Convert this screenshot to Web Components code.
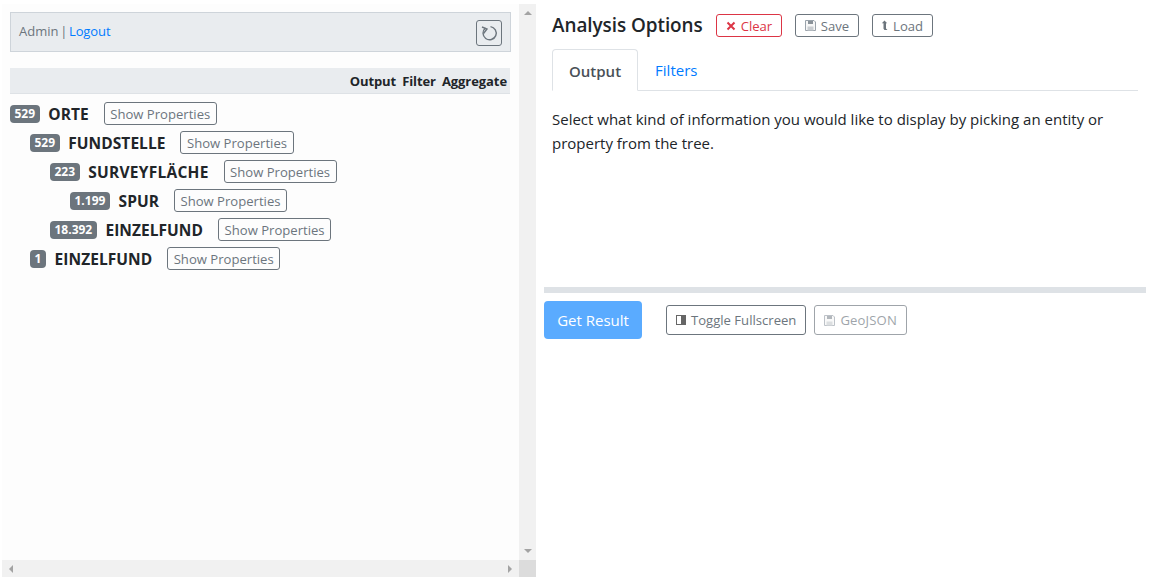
<!DOCTYPE html>
<html lang="en">
<head>
<meta charset="utf-8">
<title>Analysis</title>
<style>
  html, body { margin: 0; height: 100%; background: #fff; }
  body { font: 15px/24px "Open Sans", sans-serif; color: #212529; overflow: hidden; }
</style>
</head>
<body>
<analysis-app>
  <scroll-pane slot="left">
    <user-bar></user-bar>
    <tree-head></tree-head>
    <tree-row count="529" label="ORTE" level="0"></tree-row>
    <tree-row count="529" label="FUNDSTELLE" level="1"></tree-row>
    <tree-row count="223" label="SURVEYFLÄCHE" level="2" tracking=".25"></tree-row>
    <tree-row count="1.199" label="SPUR" level="3"></tree-row>
    <tree-row count="18.392" label="EINZELFUND" level="2"></tree-row>
    <tree-row count="1" label="EINZELFUND" level="1"></tree-row>
  </scroll-pane>
  <options-panel slot="right"></options-panel>
</analysis-app>

<script>
// small icons shared by the buttons
const ICONS = {
  cross: '<svg width="10" height="10" viewBox="0 0 10 10"><path d="M1.500 1.500l7 7M8.500 1.500l-7 7" stroke="currentColor" stroke-width="2" fill="none"/></svg>',
  save: '<svg width="11" height="11" viewBox="0 0 11 11"><path d="M.5.5h8.500l1.500 1.500v8.500h-10z" fill="#f7f7f7" stroke="#9aa3ab"/><path d="M3 1h5v3h-5z" fill="#8a9299"/><path d="M2.500 6.500h6v4h-6z" fill="#c9cdd1"/></svg>',
  load: '<svg width="7" height="11" viewBox="0 0 7 11"><path d="M3.500 .5l2.700 2.800h-1.200v5.200l1.500 1.500h-3l-1-1.200v-5.500h-1.700z" fill="currentColor"/></svg>',
  half: '<svg width="10" height="10" viewBox="0 0 10 10"><rect x=".5" y=".5" width="9" height="9" fill="#fff" stroke="#666"/><rect x="5" y="1" width="4.500" height="8" fill="#666"/></svg>'
};

class ActionButton extends HTMLElement {
  constructor () {
    super();
    this.attachShadow({mode: 'open'});
    const icon = ICONS[this.getAttribute('icon')] || '';
    this.shadowRoot.innerHTML = `
      <style>
        :host { display: inline-flex; align-items: center; gap: 5px; box-sizing: border-box;
          height: var(--h, 23px); padding: 0 var(--pad, 5.500px); border: 1px solid #6c757d; border-radius: 3px;
          color: #6c757d; font-size: 13.100px; line-height: 20px; white-space: nowrap; }
        :host([tone=danger]) { border-color: #dc3545; color: #dc3545; }
        :host([disabled]) { opacity: .65; }
        svg { display: block; }
      </style>
      ${icon}<slot></slot>`;
  }
}
customElements.define('action-button', ActionButton);

class ScrollPane extends HTMLElement {
  constructor () {
    super();
    this.attachShadow({mode: 'open'});
    this.shadowRoot.innerHTML = `
      <style>
        :host { display: grid; grid-template-columns: 1fr 17px; grid-template-rows: 1fr 17px;
          height: 573px; margin-top: 4px; background: #fdfdfd; }
        .content { padding: 8px 9px 0 8px; overflow: hidden; }
        .track { background: #f1f1f1; display: flex; align-items: center; justify-content: space-between; }
        .v { flex-direction: column; padding: 7px 0; }
        .h { padding: 0 7px; }
        .corner { background: #dcdcdc; }
        i { width: 0; height: 0; border: 4px solid transparent; }
        .up { border-bottom-color: #a3a3a3; border-top-width: 0; }
        .down { border-top-color: #a3a3a3; border-bottom-width: 0; }
        .left { border-right-color: #a3a3a3; border-left-width: 0; }
        .right { border-left-color: #a3a3a3; border-right-width: 0; }
      </style>
      <div class="content"><slot></slot></div>
      <div class="track v"><i class="up"></i><i class="down"></i></div>
      <div class="track h"><i class="left"></i><i class="right"></i></div>
      <div class="corner"></div>`;
  }
}
customElements.define('scroll-pane', ScrollPane);

class UserBar extends HTMLElement {
  constructor () {
    super();
    this.attachShadow({mode: 'open'});
    this.shadowRoot.innerHTML = `
      <style>
        :host { display: flex; align-items: center; justify-content: space-between; box-sizing: border-box;
          height: 40px; width: 501px; padding: 0 8px; background: #e9ecef; border: 1px solid #ced4da; }
        .who { margin-bottom: 2px; font-size: 13px; word-spacing: -1.700px; color: #6c757d; }
        a { color: #007bff; text-decoration: none; letter-spacing: -.1px; }
        .refresh { box-sizing: border-box; width: 26px; height: 26px; margin-top: 2px; border: 1px solid #6c757d;
          border-radius: 3px; display: flex; align-items: center; justify-content: center; color: #6c757d; }
      </style>
      <span class="who">Admin | <a href="#">Logout</a></span>
      <span class="refresh"><svg width="18" height="18" viewBox="0 0 18 18" fill="none" stroke="currentColor" stroke-width="1.400"><path d="M10.500 2.600A6.600 6.600 0 1 1 5.500 4"/><path d="M2 3l5 2-3.500 4.500"/></svg></span>`;
  }
}
customElements.define('user-bar', UserBar);

class TreeHead extends HTMLElement {
  constructor () {
    super();
    this.attachShadow({mode: 'open'});
    this.shadowRoot.innerHTML = `
      <style>
        :host { display: flex; justify-content: flex-end; gap: 6px; box-sizing: border-box; width: 500px; height: 26px;
          margin: 16px 0 9px; padding: 1px 3px 0 0; background: #e9ecef; border-bottom: 1px solid #dee2e6;
          font-size: 13px; font-weight: 700; line-height: 25px; letter-spacing: -.08px; }
      </style>
      <span>Output</span><span>Filter</span><span>Aggregate</span>`;
  }
}
customElements.define('tree-head', TreeHead);

class TreeRow extends HTMLElement {
  constructor () {
    super();
    this.attachShadow({mode: 'open'});
    const level = Number(this.getAttribute('level'));
    const tracking = this.getAttribute('tracking') || '.05';
    this.shadowRoot.innerHTML = `
      <style>
        :host { display: flex; align-items: center; height: 23px; margin: -1px 0 7px ${level * 20}px; }
        .badge { box-sizing: border-box; height: 18px; padding: 0 4.500px; border-radius: 4px; background: #6c757d;
          color: #fff; font-size: 12px; font-weight: 700; line-height: 18px; }
        .name { margin: 0 15px 0 8.700px; font-size: 15.500px; font-weight: 700; letter-spacing: ${tracking}px; }
      </style>
      <span class="badge">${this.getAttribute('count')}</span>
      <span class="name">${this.getAttribute('label')}</span>
      <action-button>Show Properties</action-button>`;
  }
}
customElements.define('tree-row', TreeRow);

class OptionsPanel extends HTMLElement {
  constructor () {
    super();
    this.attachShadow({mode: 'open'});
    this.shadowRoot.innerHTML = `
      <style>
        :host { display: block; --pad: 9px; }
        .top { padding: 0 13px 0 16px; height: 287px; box-sizing: border-box; }
        .title { display: flex; align-items: center; height: 49px; }
        h1 { margin: 0 13px 0 0; font-size: 18.900px; font-weight: 600; line-height: 24px; letter-spacing: -.05px; }
        .title action-button { margin: 2px 13px 0 0; }
        .title action-button + action-button { --pad: 8.500px; }
        .tabs { display: flex; height: 42px; box-sizing: border-box; border-bottom: 1px solid #dee2e6; }
        .tab { box-sizing: border-box; height: 42px; padding: 0 16px; line-height: 42px; color: #007bff; }
        .tab.on { margin-right: 1px; color: #495057; font-weight: 600; background: #fff; border: 1px solid #dee2e6;
          border-bottom-color: #fff; border-radius: 4px 4px 0 0; }
        p { margin: 16px 0 0; }
        .rule { height: 6px; margin: 0 5px 0 8px; background: #dee2e6; }
        .actions { display: flex; align-items: center; gap: 8px; padding: 8px 0 0 8px; --h: 30px; }
        .go { box-sizing: border-box; width: 98px; height: 38px; margin-right: 16px; border-radius: 4px;
          background: #5aabff; color: #fff; line-height: 38px; text-align: center; }
        .geo { letter-spacing: .15px; }
      </style>
      <div class="top">
        <div class="title">
          <h1>Analysis Options</h1>
          <action-button tone="danger" icon="cross">Clear</action-button>
          <action-button icon="save">Save</action-button>
          <action-button icon="load">Load</action-button>
        </div>
        <div class="tabs"><span class="tab on">Output</span><span class="tab">Filters</span></div>
        <p>Select what kind of information you would like to display by picking an entity or property from the tree.</p>
      </div>
      <div class="rule"></div>
      <div class="actions">
        <span class="go">Get Result</span>
        <action-button icon="half">Toggle Fullscreen</action-button>
        <action-button icon="save" class="geo" disabled>GeoJSON</action-button>
      </div>`;
  }
}
customElements.define('options-panel', OptionsPanel);

class AnalysisApp extends HTMLElement {
  constructor () {
    super();
    this.attachShadow({mode: 'open'});
    this.shadowRoot.innerHTML = `
      <style>
        :host { display: grid; grid-template-columns: 534px 1fr; height: 577px; padding-left: 2px; }
      </style>
      <slot name="left"></slot><slot name="right"></slot>`;
  }
}
customElements.define('analysis-app', AnalysisApp);
</script>
</body>
</html>
